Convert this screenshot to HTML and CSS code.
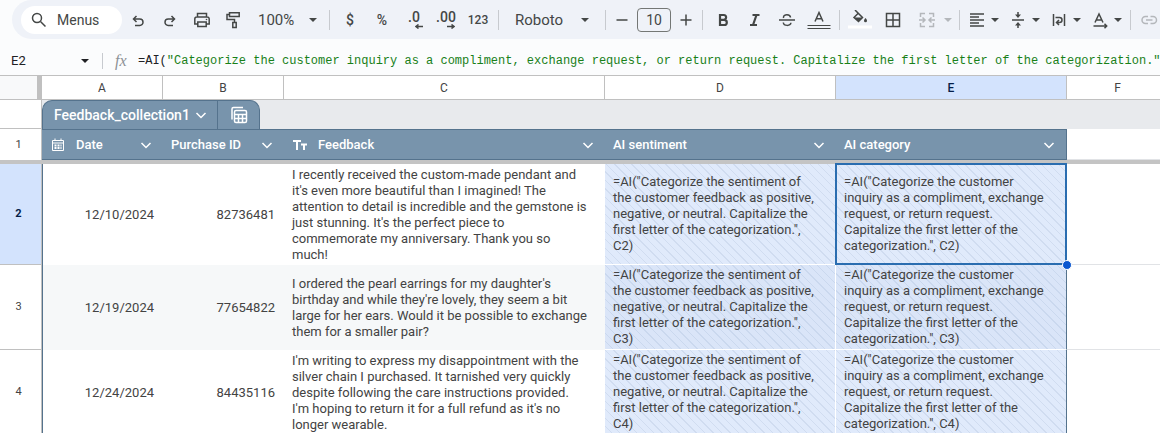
FILE: index.html
```html
<!DOCTYPE html>
<html lang="en">
<head>
  <meta charset="UTF-8">
  <meta name="viewport" content="width=device-width, initial-scale=1.0">
  <title>Feedback collection</title>
  <link rel="stylesheet" href="styles.css">
</head>
<body>
  <header class="toolbar">
    <button class="menus" type="button">
      <svg class="icon" viewBox="0 0 20 20"><circle cx="8" cy="8" r="4.5"/><path d="M11.5 11.5 16.5 16.5"/></svg>
      Menus
    </button>
    <button class="tool" type="button" aria-label="Undo">
      <svg class="icon" viewBox="0 0 20 20"><path d="M8.5 6 5.5 9l3 3M5.5 9h6.3a3.2 3.2 0 0 1 0 6.4H7"/></svg>
    </button>
    <button class="tool" type="button" aria-label="Redo">
      <svg class="icon" viewBox="0 0 20 20"><path d="M11.5 6l3 3-3 3M14.5 9H8.2a3.2 3.2 0 0 0 0 6.4H13"/></svg>
    </button>
    <button class="tool" type="button" aria-label="Print">
      <svg class="icon" viewBox="0 0 20 20"><path d="M5.5 7V3.5h9V7M5.5 14H2.8V9a2 2 0 0 1 2-2h10.4a2 2 0 0 1 2 2v5H14.5M5.8 12h8.4v4.5H5.8z"/><circle class="solid" cx="14.5" cy="9.5" r=".8"/></svg>
    </button>
    <button class="tool" type="button" aria-label="Paint format">
      <svg class="icon" viewBox="0 0 20 20"><path d="M5.5 2.8h9.7v3.7H5.500zM5.5 4.5H3v5h7.5v3M8.800 12.5h3.4v5H8.8z"/></svg>
    </button>
    <label class="picker zoom-picker">
      <select aria-label="Zoom"><option>100%</option></select>
      <svg class="caret" viewBox="0 0 8 4"><path d="M0 0h8L4 4z"/></svg>
    </label>
    <span class="divider"></span>
    <button class="tool" type="button">$</button>
    <button class="tool" type="button">%</button>
    <button class="tool decimals" type="button" aria-label="Decrease decimal places">.0
      <svg class="decimal-arrow" viewBox="0 0 8 5"><path d="M8 2.5H1M3.5.5l-2.5 2 2.5 2"/></svg>
    </button>
    <button class="tool decimals" type="button" aria-label="Increase decimal places">.00
      <svg class="decimal-arrow" viewBox="0 0 8 5"><path d="M0 2.5h7M4.5.5l2.5 2-2.5 2"/></svg>
    </button>
    <button class="tool digits" type="button">123</button>
    <span class="divider"></span>
    <label class="picker font-picker">
      <select aria-label="Font"><option>Roboto</option></select>
      <svg class="caret" viewBox="0 0 8 4"><path d="M0 0h8L4 4z"/></svg>
    </label>
    <span class="divider"></span>
    <button class="step" type="button" aria-label="Decrease font size">
      <svg class="icon" viewBox="0 0 20 20"><path d="M4.5 10h11"/></svg>
    </button>
    <input class="size" type="text" value="10" aria-label="Font size">
    <button class="step" type="button" aria-label="Increase font size">
      <svg class="icon" viewBox="0 0 20 20"><path d="M4.5 10h11M10 4.5v11"/></svg>
    </button>
    <span class="divider"></span>
    <button class="tool" type="button" aria-label="Bold">
      <svg class="icon bold" viewBox="0 0 20 20"><path d="M7 5h3.7a2.4 2.4 0 0 1 0 4.8H7zM7 9.8h4.2a2.6 2.6 0 0 1 0 5.2H7z"/></svg>
    </button>
    <button class="tool" type="button" aria-label="Italic">
      <svg class="icon bold" viewBox="0 0 20 20"><path d="M7.5 5h7M5 15h7M11.5 5l-3.5 10"/></svg>
    </button>
    <button class="tool" type="button" aria-label="Strikethrough">
      <svg class="icon" viewBox="0 0 20 20"><path d="M2 10h16M13.5 7.5C13.3 3.8 6.5 3.8 6.5 7.3c0 .3 0 .5.1.7M6.3 12.5c.4 3.8 7.6 3.8 7.6.2"/></svg>
    </button>
    <button class="tool" type="button" aria-label="Text color">
      <svg class="icon wide" viewBox="0 0 24 20"><path d="M8 11.5 12 2.5l4 9M9.3 8.8h5.4"/><path class="thin" d="M.5 15.5h23M.5 18.5h23"/></svg>
    </button>
    <span class="divider"></span>
    <button class="tool" type="button" aria-label="Fill color">
      <svg class="icon wide" viewBox="0 0 24 20"><path d="M7 0l7.5 7.5-4 4L6 7.5l4-4"/><path class="solid" d="M6 7.5h8.5l-4 4zM17.5 8c1 1.3 1.5 2 1.5 2.7a1.500 1.500 0 0 1-3 0c0-.7.5-1.4 1.5-2.700z"/><path class="swatch" d="M0 17h24"/></svg>
    </button>
    <button class="tool borders" type="button" aria-label="Borders">
      <svg class="icon" viewBox="0 0 20 20"><path d="M3.5 3.5h13v13h-13zM10 3.5v13M3.5 10h13"/></svg>
    </button>
    <button class="tool drop faded" type="button" aria-label="Merge cells">
      <svg class="icon" viewBox="0 0 20 20"><path d="M8 3.5H3.5V7M12 3.5h4.5V7M8 16.5H3.5V13M12 16.5h4.5V13M2 10h5.5M5.5 7.500 8 10l-2.500 2.5M18 10h-5.5M14.5 7.500 12 10l2.5 2.5"/></svg>
      <svg class="caret" viewBox="0 0 8 4"><path d="M0 0h8L4 4z"/></svg>
    </button>
    <span class="divider"></span>
    <button class="tool drop" type="button" aria-label="Horizontal align">
      <svg class="icon" viewBox="0 0 20 20"><path d="M3 4h14M3 7h9M3 10h14M3 13h9M3 16h14"/></svg>
      <svg class="caret" viewBox="0 0 8 4"><path d="M0 0h8L4 4z"/></svg>
    </button>
    <button class="tool drop" type="button" aria-label="Vertical align">
      <svg class="icon" viewBox="0 0 20 20"><path d="M4 10h12M10 2v4M10 18v-4"/><path class="solid" d="M7 4.500h6L10 8zM7 15.5h6L10 12z"/></svg>
      <svg class="caret" viewBox="0 0 8 4"><path d="M0 0h8L4 4z"/></svg>
    </button>
    <button class="tool drop" type="button" aria-label="Text wrapping">
      <svg class="icon" viewBox="0 0 20 20"><path d="M4.5 4v12M15.5 4v12M6.5 7.5h4a2.500 2.500 0 0 1 0 5H8M10 10l-2.5 2.5L10 15"/></svg>
      <svg class="caret" viewBox="0 0 8 4"><path d="M0 0h8L4 4z"/></svg>
    </button>
    <button class="tool drop" type="button" aria-label="Text rotation">
      <svg class="icon" viewBox="0 0 20 20"><path d="M5 12.5 9 4l4 8.5M6.3 10h5.4M3.5 16h13M14.5 13.8l2.2 2.2-2.2 2.2"/></svg>
      <svg class="caret" viewBox="0 0 8 4"><path d="M0 0h8L4 4z"/></svg>
    </button>
    <span class="divider last-divider"></span>
    <button class="tool faded" type="button" aria-label="Insert link">
      <svg class="icon" viewBox="0 0 20 20"><path d="M9 6.500H6.500a3.500 3.500 0 0 0 0 7H9M11.500 6.500H14a3.500 3.500 0 0 1 0 7h-2.500M7 10h6.500"/></svg>
    </button>
  </header>

  <div class="formula-bar">
    <label class="name-box">
      <input type="text" value="E2" aria-label="Name box">
      <svg class="caret" viewBox="0 0 8 4"><path d="M0 0h8L4 4z"/></svg>
    </label>
    <span class="fx">fx</span>
    <div class="formula">=AI(<span class="string">"Categorize the customer inquiry as a compliment, exchange request, or return request. Capitalize the first letter of the categorization."</span></div>
  </div>

  <table class="sheet">
    <colgroup>
      <col class="col-row">
      <col class="col-narrow">
      <col class="col-narrow">
      <col class="col-feedback">
      <col class="col-ai">
      <col class="col-ai">
      <col>
    </colgroup>
    <thead>
      <tr class="letters">
        <th class="corner"></th>
        <th>A</th>
        <th>B</th>
        <th>C</th>
        <th>D</th>
        <th class="active">E</th>
        <th class="last">F</th>
      </tr>
      <tr class="tabs">
        <th class="row-num"></th>
        <td colspan="6">
          <div class="tab">
            <button class="tab-name" type="button">Feedback_collection1
              <svg class="chevron" viewBox="0 0 12 12"><path d="M1.500 4 6 8.500 10.500 4"/></svg>
            </button>
            <button class="tab-view" type="button" aria-label="Table views">
              <svg class="view-icon" viewBox="0 0 18 18"><path d="M2 13.500V3a1.500 1.500 0 0 1 1.500-1.500H13M4.500 6a1.500 1.500 0 0 1 1.500-1.500h9A1.500 1.500 0 0 1 16.500 6v9a1.500 1.500 0 0 1-1.500 1.500H6A1.500 1.500 0 0 1 4.500 15zM4.500 8.500h12M4.500 12.500h12M8.500 8.500v8M12.500 8.500v8"/></svg>
            </button>
          </div>
        </td>
      </tr>
      <tr class="fields">
        <th class="row-num">1</th>
        <th>
          <div class="field">
            <svg class="field-icon" viewBox="0 0 14 14"><path d="M1.500 2.500h11v10h-11zM1.500 5h11M4 .5v2M10 .5v2"/><path class="dots" d="M3.500 7.500h7M3.500 10h7"/></svg>
            <span>Date</span>
            <svg class="chevron" viewBox="0 0 12 12"><path d="M1.500 4 6 8.500 10.500 4"/></svg>
          </div>
        </th>
        <th>
          <div class="field">
            <span>Purchase ID</span>
            <svg class="chevron" viewBox="0 0 12 12"><path d="M1.500 4 6 8.500 10.500 4"/></svg>
          </div>
        </th>
        <th>
          <div class="field">
            <svg class="field-icon" viewBox="0 0 14 14"><path class="heavy" d="M0 3h8M4 3v9M8 6.500h6M11 6.500V12"/></svg>
            <span>Feedback</span>
            <svg class="chevron" viewBox="0 0 12 12"><path d="M1.500 4 6 8.500 10.500 4"/></svg>
          </div>
        </th>
        <th>
          <div class="field">
            <span>AI sentiment</span>
            <svg class="chevron" viewBox="0 0 12 12"><path d="M1.500 4 6 8.500 10.500 4"/></svg>
          </div>
        </th>
        <th class="edge">
          <div class="field">
            <span>AI category</span>
            <svg class="chevron" viewBox="0 0 12 12"><path d="M1.500 4 6 8.500 10.500 4"/></svg>
          </div>
        </th>
        <td class="empty"></td>
      </tr>
      <tr class="freeze"><td colspan="7"></td></tr>
    </thead>
    <tbody>
      <tr class="tall">
        <th class="row-num active">2</th>
        <td class="number first">12/10/2024</td>
        <td class="number">82736481</td>
        <td class="feedback">I recently received the custom-made pendant and it's even more beautiful than I imagined! The attention to detail is incredible and the gemstone is just stunning. It's the perfect piece to commemorate my anniversary. Thank you so much!</td>
        <td class="ai">=AI("Categorize the sentiment of the customer feedback as positive, negative, or neutral. Capitalize the first letter of the categorization.", C2)</td>
        <td class="ai edge selected">=AI("Categorize the customer inquiry as a compliment, exchange request, or return request. Capitalize the first letter of the categorization.", C2)<span class="handle"></span></td>
        <td class="empty"></td>
      </tr>
      <tr class="banded">
        <th class="row-num">3</th>
        <td class="number first">12/19/2024</td>
        <td class="number">77654822</td>
        <td class="feedback">I ordered the pearl earrings for my daughter's birthday and while they're lovely, they seem a bit large for her ears. Would it be possible to exchange them for a smaller pair?</td>
        <td class="ai">=AI("Categorize the sentiment of the customer feedback as positive, negative, or neutral. Capitalize the first letter of the categorization.", C3)</td>
        <td class="ai edge">=AI("Categorize the customer inquiry as a compliment, exchange request, or return request. Capitalize the first letter of the categorization.", C3)</td>
        <td class="empty"></td>
      </tr>
      <tr>
        <th class="row-num">4</th>
        <td class="number first">12/24/2024</td>
        <td class="number">84435116</td>
        <td class="feedback">I'm writing to express my disappointment with the silver chain I purchased. It tarnished very quickly despite following the care instructions provided. I'm hoping to return it for a full refund as it's no longer wearable.</td>
        <td class="ai">=AI("Categorize the sentiment of the customer feedback as positive, negative, or neutral. Capitalize the first letter of the categorization.", C4)</td>
        <td class="ai edge">=AI("Categorize the customer inquiry as a compliment, exchange request, or return request. Capitalize the first letter of the categorization.", C4)</td>
        <td class="empty"></td>
      </tr>
    </tbody>
  </table>
</body>
</html>
```

FILE: styles.css
```css
* {
  box-sizing: border-box;
}

body {
  margin: 0;
  background: #fbfcfd;
  color: #434343;
  font-family: Roboto, "Liberation Sans", sans-serif;
  font-size: 13px;
  line-height: 16px;
  overflow: hidden;
}

button, input, select {
  margin: 0;
  padding: 0;
  border: none;
  background: none;
  color: inherit;
  font: inherit;
}

svg {
  flex: none;
  fill: none;
  stroke: currentColor;
  stroke-width: 1.5;
}

/* Toolbar */
.toolbar {
  display: flex;
  align-items: center;
  height: 39px;
  margin-left: 12px;
  padding-left: 9px;
  border-radius: 20px 0 0 20px;
  background: #eff2f8;
  color: #444746;
  overflow: hidden;
}

.menus {
  display: flex;
  flex: none;
  align-items: center;
  gap: 8px;
  width: 101px;
  height: 28px;
  padding-left: 8px;
  border-radius: 14px;
  background: #fff;
  font-size: 14px;
}

.tool {
  display: flex;
  flex: none;
  align-items: center;
  justify-content: center;
  width: 32px;
  height: 30px;
  font-size: 14px;
  font-weight: 500;
}

.icon {
  width: 20px;
  height: 20px;
}

.icon.wide {
  width: 24px;
}

.icon.bold {
  stroke-width: 2.2;
}

.thin {
  stroke-width: 1;
}

.solid {
  fill: currentColor;
  stroke: none;
}

.swatch {
  stroke: #fff;
  stroke-width: 3;
}

.caret {
  width: 8px;
  height: 4px;
  fill: currentColor;
  stroke: none;
}

.borders {
  width: 34px;
}

.drop {
  justify-content: flex-start;
  gap: 4px;
  width: 41px;
  padding-left: 3px;
}

.faded {
  color: #b4b7bb;
}

.drop.faded {
  width: 45px;
  gap: 7px;
  padding-left: 7px;
}

.digits {
  font-size: 12px;
}

.decimals {
  flex-direction: column;
  line-height: 14px;
}

.decimal-arrow {
  align-self: flex-end;
  width: 8px;
  height: 5px;
  margin-right: 7px;
}

.picker {
  display: flex;
  flex: none;
  align-items: center;
  font-size: 15px;
}

.picker select {
  flex: 1;
  min-width: 0;
  appearance: none;
}

.zoom-picker {
  width: 79px;
  padding: 0 12px 0 8px;
}

.font-picker {
  width: 98px;
  padding: 0 12px;
}

.divider {
  flex: none;
  width: 1px;
  height: 20px;
  margin: 0 4px;
  background: #c7cacf;
}

.zoom-picker + .divider {
  margin-left: 0;
}

.last-divider {
  margin: 0 2px;
}

.step {
  display: flex;
  flex: none;
  justify-content: center;
  width: 24px;
}

.size {
  flex: none;
  width: 34px;
  height: 24px;
  margin: 0 3px;
  border: 1px solid #747775;
  border-radius: 4px;
  font-size: 14px;
  text-align: center;
}

/* Formula bar */
.formula-bar {
  display: flex;
  align-items: center;
  height: 36px;
  padding-top: 8px;
  color: #202124;
}

.name-box {
  display: flex;
  flex: none;
  align-items: center;
  width: 103px;
  height: 16px;
  padding: 0 13px 0 11px;
  border-right: 1px solid #c7cacf;
}

.name-box input {
  flex: 1;
  min-width: 0;
}

.fx {
  flex: none;
  width: 35px;
  padding-left: 12px;
  color: #8d9195;
  font-family: "Liberation Serif", serif;
  font-size: 16px;
  font-style: italic;
}

.formula {
  flex: 1;
  min-width: 0;
  font-family: "Liberation Mono", monospace;
  font-size: 12px;
  white-space: nowrap;
}

.string {
  color: #188018;
}

/* Grid */
.sheet {
  width: 100%;
  table-layout: fixed;
  border-spacing: 0;
  border-top: 1px solid #c0c0c0;
  background: #fff;
}

.col-row {
  width: 42px;
}

.col-narrow {
  width: 121px;
}

.col-feedback {
  width: 321px;
}

.col-ai {
  width: 231px;
}

th, td {
  padding: 0;
}

.letters th {
  height: 24px;
  border-right: 1px solid #c0c0c0;
  border-bottom: 1px solid #c0c0c0;
  font-size: 12px;
  font-weight: 400;
}

.letters .corner {
  border-right: 5px solid #c0c0c0;
  background: #f8f9fa;
}

.letters .active {
  background: #d3e3fd;
  color: #041e49;
  font-weight: 500;
}

.letters .last {
  border-right: none;
  padding-left: 8px;
}

.row-num {
  border-right: 1px solid #c0c0c0;
  border-bottom: 1px solid #c0c0c0;
  background: #fff;
  font-size: 11px;
  font-weight: 400;
  padding-right: 4px;
}

.row-num.active {
  background: #d3e3fd;
  color: #041e49;
  font-weight: 700;
}

.tabs td {
  height: 29px;
  background: #e8eaed;
  vertical-align: bottom;
}

.tab {
  display: flex;
  width: 218px;
  height: 29px;
  border: 1px solid #55738d;
  border-bottom: none;
  border-radius: 10px 10px 0 0;
  background: #7894ac;
  color: #fff;
}

.tab-name {
  display: flex;
  flex: 1;
  align-items: center;
  justify-content: space-between;
  padding: 0 10px 0 11px;
  border-right: 1px solid #55738d;
  font-size: 14px;
  font-weight: 500;
}

.tab-view {
  display: flex;
  align-items: center;
  justify-content: center;
  width: 41px;
}

.view-icon {
  width: 18px;
  height: 18px;
}

.chevron {
  width: 12px;
  height: 12px;
}

.fields th {
  height: 31px;
}

.fields .row-num {
  border-bottom: none;
}

.fields th:not(.row-num) {
  border-top: 1px solid #55738d;
  border-bottom: 1px solid #55738d;
  background: #7894ac;
  color: #fff;
  font-weight: 500;
}

.fields .edge {
  border-right: 1px solid #55738d;
}

.field {
  display: flex;
  align-items: center;
  padding: 0 11px 0 8px;
}

.field .chevron {
  margin-left: auto;
}

.field-icon {
  width: 14px;
  height: 14px;
  margin: 0 11px 0 1px;
  stroke-width: 1;
}

.dots {
  stroke-width: 2;
  stroke-dasharray: 2 1;
}

.heavy {
  stroke-width: 2;
}

.freeze td {
  height: 4px;
  background: #c4c4c4;
}

tbody td {
  height: 85px;
  padding: 0 8px;
  vertical-align: middle;
}

.tall td {
  height: 101px;
}

.banded td {
  background: #f6f8f9;
}

tbody .number {
  padding-right: 9px;
  text-align: right;
}

tbody .feedback {
  padding-right: 18px;
}

tbody .first {
  border-left: 1px solid #55738d;
}

tbody .ai {
  padding-right: 16px;
  border-right: 1px solid #fff;
  border-bottom: 1px solid #fff;
  background: repeating-linear-gradient(45deg, #e0eafb 0, #e0eafb 5px, #d0dcf0 5px, #d0dcf0 6px);
}

.banded .ai {
  background: repeating-linear-gradient(45deg, #dae5f8 0, #dae5f8 5px, #cad8ee 5px, #cad8ee 6px);
}

tbody .edge {
  border-right: 1px solid #55738d;
}

tbody .empty, .fields .empty {
  border-bottom: 1px solid #e1e3e6;
  background: #fff;
}

/* Active cell */
.selected {
  position: relative;
}

.selected::after {
  content: "";
  position: absolute;
  inset: -1px;
  border: 2px solid #2a6db0;
}

.handle {
  position: absolute;
  right: -6px;
  bottom: -6px;
  z-index: 1;
  width: 10px;
  height: 10px;
  border: 1px solid #fff;
  border-radius: 50%;
  background: #0b57d0;
}
```
